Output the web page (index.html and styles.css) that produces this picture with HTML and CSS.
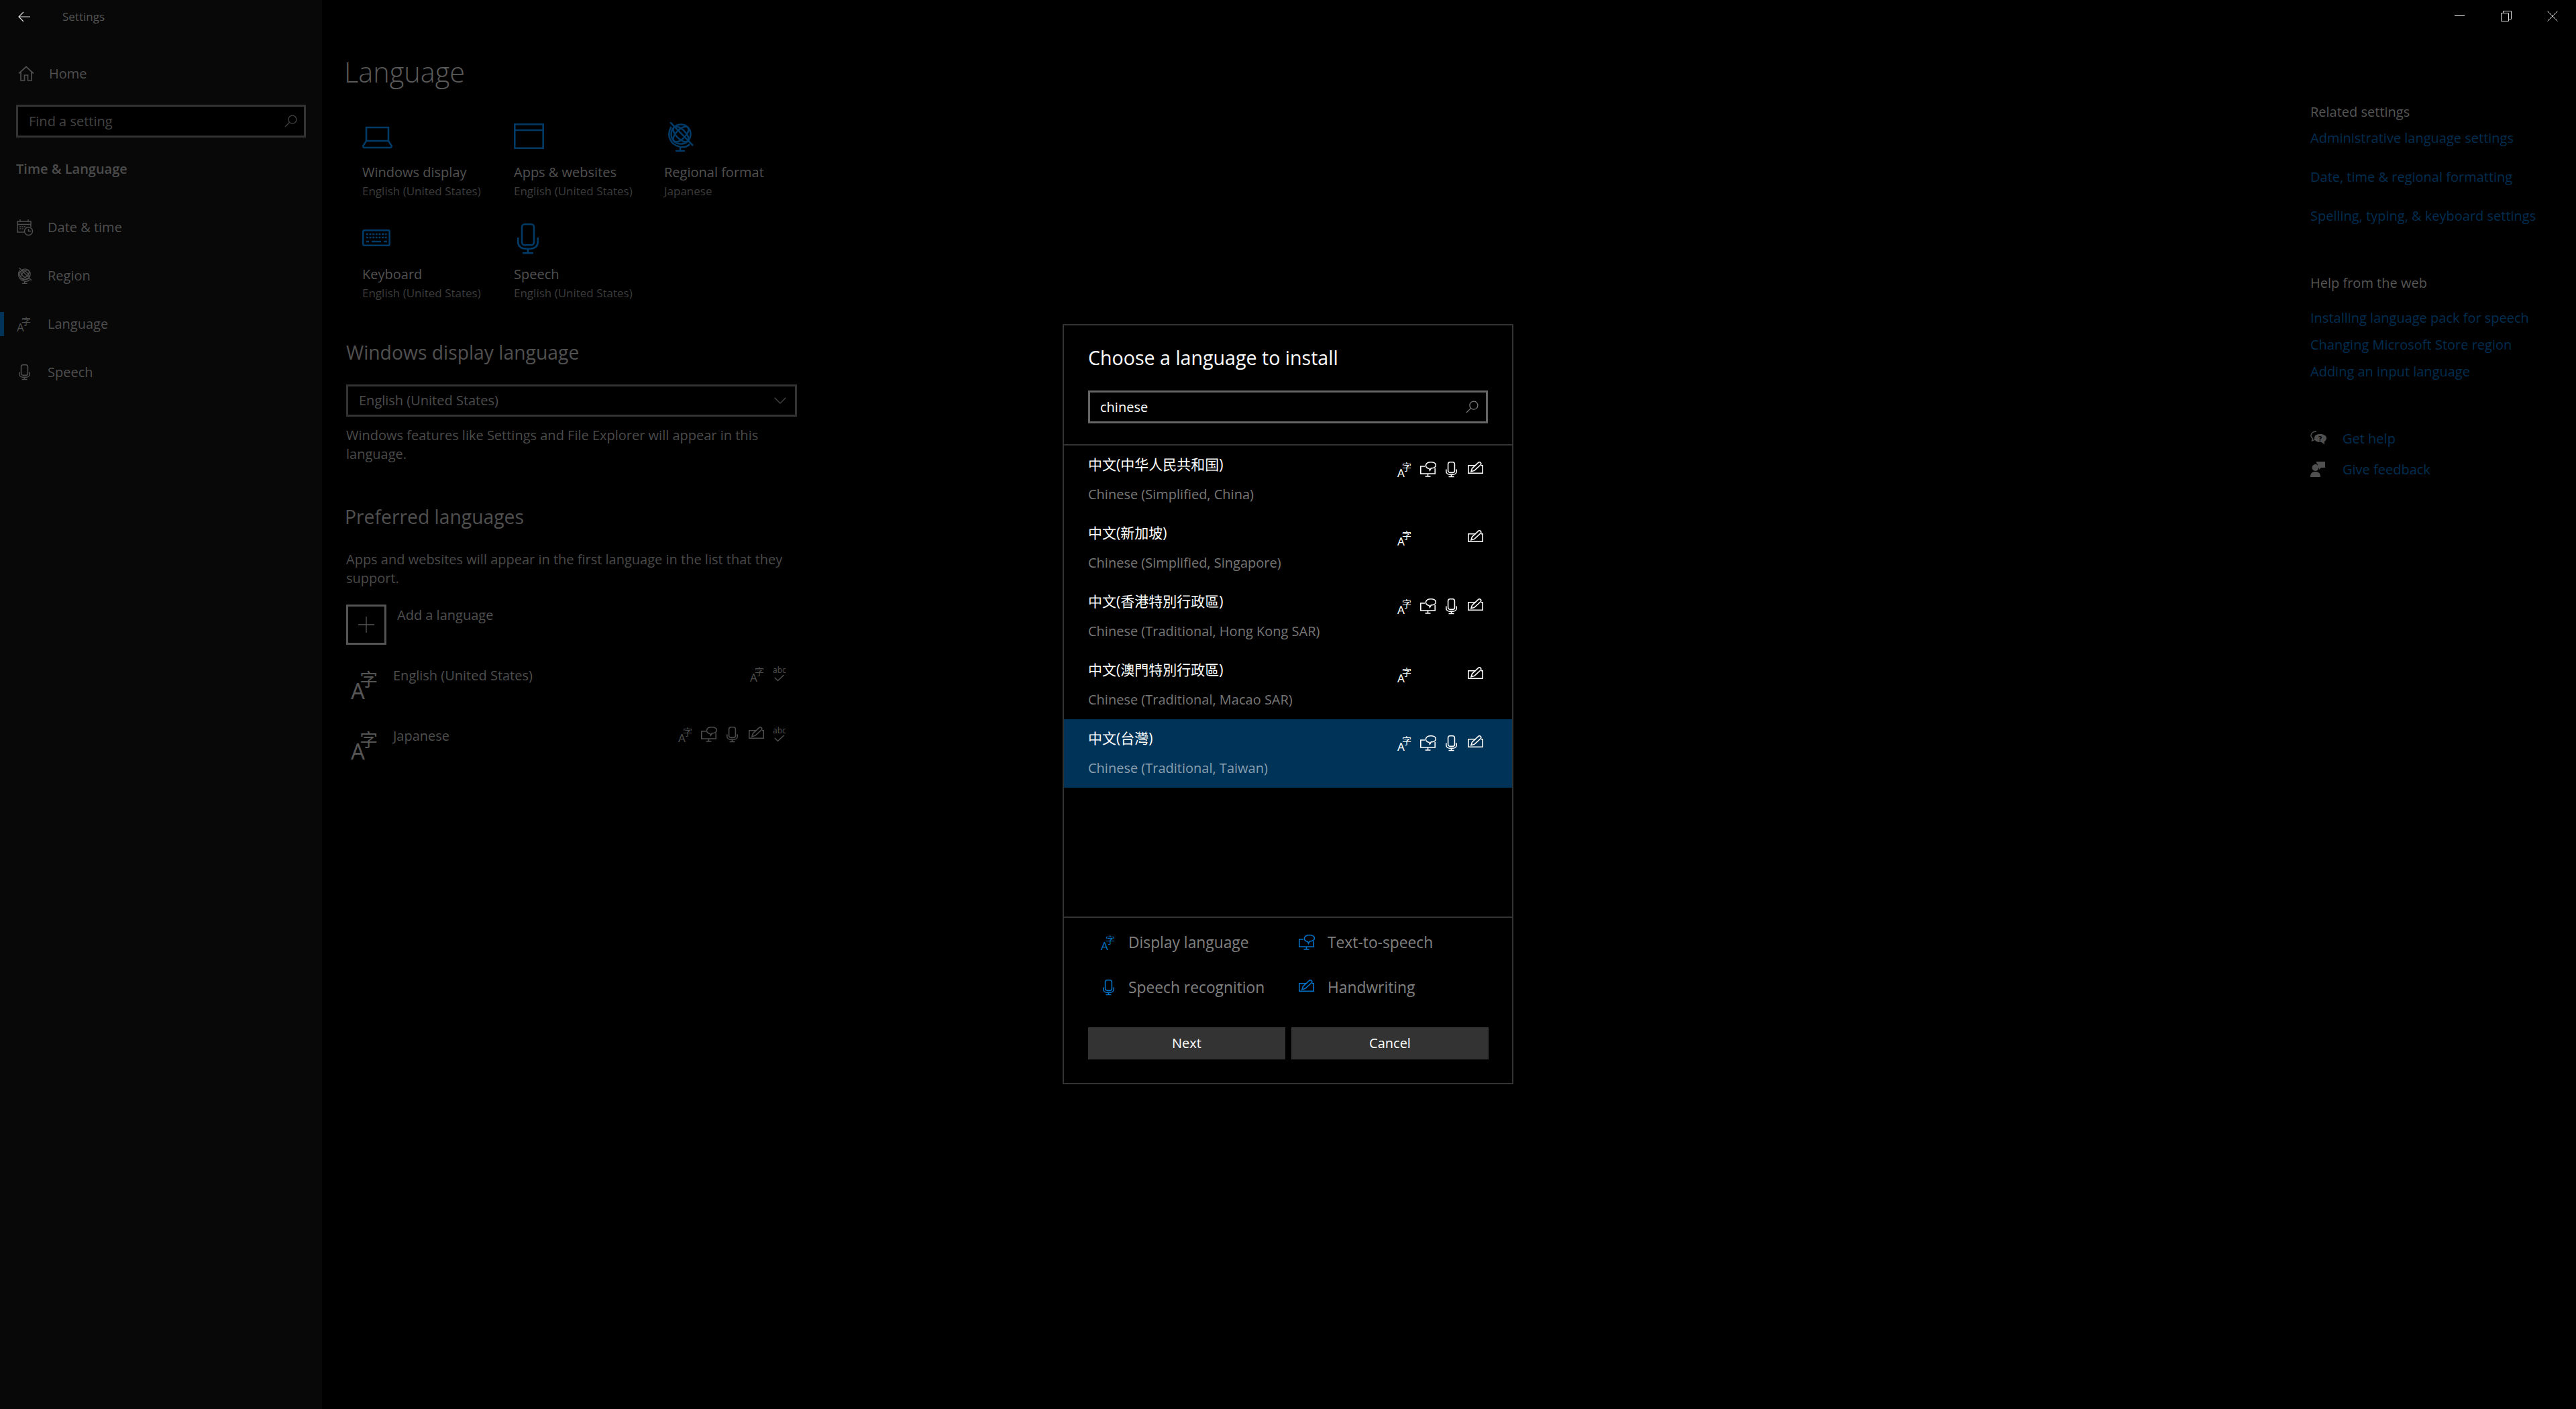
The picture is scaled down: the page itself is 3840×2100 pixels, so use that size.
FILE: index.html
```html
<!DOCTYPE html>
<html lang="en">
<head>
<meta charset="utf-8">
<title>Settings</title>
<link rel="stylesheet" href="styles.css">
</head>
<body>
<svg class="defs" width="0" height="0" aria-hidden="true">
  <symbol id="mon" viewBox="0 0 24 24">
    <g fill="none" stroke="currentColor" stroke-width="1.6">
      <path d="M7 7H.8V18H22.2V10"/><path d="M11.5 18V21.5M7.5 22H15.5"/>
      <path d="M13.5 10.5C9.5 9.5 8 7.5 8.5 5C9.2 2 12.5.8 16 .8C20 .8 23.4 2.5 23.4 5.4C23.4 8.4 19.5 10.2 16.5 9.7L14.5 13.2Z"/>
    </g>
  </symbol>
  <symbol id="mic" viewBox="0 0 24 24">
    <g fill="none" stroke="currentColor" stroke-width="1.6">
      <rect x="6.6" y=".8" width="9.8" height="15.6" rx="3"/>
      <path d="M3.8 11.5V14.5C3.8 17.5 6.5 19.2 9 19.2H14C16.5 19.2 19.2 17.5 19.2 14.5V11.5M11.5 19.2V22M7.5 22.5H15.5"/>
    </g>
  </symbol>
  <symbol id="hand" viewBox="0 0 24 24">
    <g fill="none" stroke="currentColor" stroke-width="1.6">
      <path d="M11.5 5.8H.8V17.2H22.2V5.8H20"/>
      <path d="M5 14.8L6.4 10.2L15.8 1.4C16.8.6 18 .6 19 1.6C20 2.6 20 3.8 19.2 4.8L9.8 13.4Z"/>
    </g>
  </symbol>
  <symbol id="check" viewBox="0 0 24 24">
    <path d="M3 17L7.500 21.500L16.500 13" fill="none" stroke="currentColor" stroke-width="1.6"/>
  </symbol>
  <symbol id="search" viewBox="0 0 20 20">
    <g fill="none" stroke="currentColor" stroke-width="1.4">
      <circle cx="12.5" cy="7.5" r="6.3"/><path d="M8 12L1 19"/>
    </g>
  </symbol>
  <symbol id="globe" viewBox="0 0 39 44">
    <g fill="none" stroke="currentColor" stroke-width="2.6">
      <circle cx="20" cy="18" r="14.5"/>
      <ellipse cx="20" cy="18" rx="14.5" ry="7" transform="rotate(45 20 18)"/>
      <ellipse cx="20" cy="18" rx="14.5" ry="7" transform="rotate(-45 20 18)"/>
      <path d="M4 0L38 35M5.500 7C-1 18 2 33 19 37C25 38 29 37 33 33M19 37V43M12 43H26"/>
    </g>
  </symbol>
</svg>

<aside class="sidebar">
  <div class="titlebar">
    <svg class="back" viewBox="0 0 18 16"><path d="M18 8H1M8 1L1 8L8 15" fill="none" stroke="currentColor" stroke-width="1.2"/></svg>
    <span class="app-name">Settings</span>
  </div>
  <div class="home-row">
    <svg class="ic home-ic" viewBox="0 0 24 24"><path d="M1 11.500L12 1.500L23 11.500M4 9V22H9.500V14H14.500V22H20V9" fill="none" stroke="currentColor" stroke-width="1.7"/></svg>
    <span>Home</span>
  </div>
  <div class="find">
    <span>Find a setting</span>
    <svg class="find-ic" viewBox="0 0 20 20"><use href="#search"/></svg>
  </div>
  <div class="crumb">Time &amp; Language</div>
  <nav class="nav">
    <div class="nav-row">
      <svg class="ic" viewBox="0 0 24 24"><g fill="none" stroke="currentColor" stroke-width="1.5"><path d="M11 19H1V3H21V11M1 7.500H21M5 0V4M17 0V4"/><circle cx="17.500" cy="17.500" r="6"/><path d="M17.500 14V17.500H21"/><path d="M4 11H14M4 14H11" stroke-dasharray="2 1.200"/></g></svg>
      <span>Date &amp; time</span>
    </div>
    <div class="nav-row">
      <svg class="ic" viewBox="0 0 39 44"><use href="#globe"/></svg>
      <span>Region</span>
    </div>
    <div class="nav-row current">
      <svg class="ic" viewBox="0 0 24 24"><text x="0" y="23"><tspan class="g-a">A</tspan><tspan class="g-z" dx="-4" dy="-10">字</tspan></text></svg>
      <span>Language</span>
    </div>
    <div class="nav-row">
      <svg class="ic" viewBox="0 0 24 24"><use href="#mic"/></svg>
      <span>Speech</span>
    </div>
  </nav>
</aside>

<main class="content">
  <h1>Language</h1>
  <div class="tiles">
    <div class="tile">
      <svg class="tile-ic" viewBox="0 0 56 56"><path d="M6 32V12H39V32M6 32L1.500 39C1 41 1.500 42 3 42H42C43.500 42 44 41 43.500 39L39 32Z" fill="none" stroke="currentColor" stroke-width="2.600"/></svg>
      <div class="tile-label">Windows display</div>
      <div class="tile-sub">English (United States)</div>
    </div>
    <div class="tile">
      <svg class="tile-ic" viewBox="0 0 56 56"><path d="M1.300 7.300H43.700V42.700H1.300ZM1.300 16H43.700" fill="none" stroke="currentColor" stroke-width="2.600"/></svg>
      <div class="tile-label">Apps &amp; websites</div>
      <div class="tile-sub">English (United States)</div>
    </div>
    <div class="tile">
      <svg class="tile-ic" viewBox="0 0 56 56"><use href="#globe" x="5" y="4" width="39" height="44"/></svg>
      <div class="tile-label">Regional format</div>
      <div class="tile-sub">Japanese</div>
    </div>
    <div class="tile">
      <svg class="tile-ic" viewBox="0 0 56 56"><rect x="1.300" y="13.300" width="39.400" height="22.400" rx="2" fill="none" stroke="currentColor" stroke-width="2.600"/><path d="M6 19H37M6 24H37" stroke="currentColor" stroke-width="2.600" stroke-dasharray="3 1.600"/><path d="M6 30H10M14 30H28M32 30H37" stroke="currentColor" stroke-width="2.600"/></svg>
      <div class="tile-label">Keyboard</div>
      <div class="tile-sub">English (United States)</div>
    </div>
    <div class="tile">
      <svg class="tile-ic" viewBox="0 0 56 56"><g fill="none" stroke="currentColor" stroke-width="2.600"><rect x="12" y="4.300" width="18" height="31" rx="4"/><path d="M6.300 24V31C6.300 37 11 40.700 17 40.700H25C31 40.700 35.700 37 35.700 31V24M21 40.700V47M13 47.300H29"/></g></svg>
      <div class="tile-label">Speech</div>
      <div class="tile-sub">English (United States)</div>
    </div>
  </div>

  <h2 class="h-display">Windows display language</h2>
  <div class="select">
    <span>English (United States)</span>
    <svg class="chev" viewBox="0 0 18 10"><path d="M.7 .7L9 9L17.300 .7" fill="none" stroke="currentColor" stroke-width="1.300"/></svg>
  </div>
  <p class="note note-display">Windows features like Settings and File Explorer will appear in this<br>language.</p>

  <h2 class="h-pref">Preferred languages</h2>
  <p class="note note-pref">Apps and websites will appear in the first language in the list that they<br>support.</p>
  <div class="add-row">
    <div class="add-box"><svg class="plus" viewBox="0 0 24 24"><path d="M12 0V24M0 12H24" stroke="currentColor" stroke-width="1.300"/></svg></div>
    <span class="add-label">Add a language</span>
  </div>
  <div class="pref-row pref-first">
    <svg class="pref-ic" viewBox="0 0 24 24"><text x="0" y="23"><tspan class="g-a">A</tspan><tspan class="g-z" dx="-4" dy="-10">字</tspan></text></svg>
    <span class="pref-name">English (United States)</span>
    <div class="caps">
      <svg class="cap w-lang" viewBox="0 0 24 24"><text x="0" y="23"><tspan class="g-a">A</tspan><tspan class="g-z" dx="-4" dy="-10">字</tspan></text></svg>
      <svg class="cap" viewBox="0 0 24 24"><text class="g-abc" x="0" y="10">abc</text><use href="#check"/></svg>
    </div>
  </div>
  <div class="pref-row">
    <svg class="pref-ic" viewBox="0 0 24 24"><text x="0" y="23"><tspan class="g-a">A</tspan><tspan class="g-z" dx="-4" dy="-10">字</tspan></text></svg>
    <span class="pref-name">Japanese</span>
    <div class="caps">
      <svg class="cap w-lang" viewBox="0 0 24 24"><text x="0" y="23"><tspan class="g-a">A</tspan><tspan class="g-z" dx="-4" dy="-10">字</tspan></text></svg>
      <svg class="cap w-mon" viewBox="0 0 24 24"><use href="#mon"/></svg>
      <svg class="cap w-mic" viewBox="0 0 24 24"><use href="#mic"/></svg>
      <svg class="cap w-hand" viewBox="0 0 24 24"><use href="#hand"/></svg>
      <svg class="cap" viewBox="0 0 24 24"><text class="g-abc" x="0" y="10">abc</text><use href="#check"/></svg>
    </div>
  </div>
</main>

<aside class="related">
  <div class="winctl">
    <div class="winbtn"><svg viewBox="0 0 16 16"><path d="M0 7.500H15" stroke="currentColor"/></svg></div>
    <div class="winbtn"><svg viewBox="0 0 16 16"><path d="M.5 3.500H11.500V15.500H.5ZM3.500 3.500V.5H15.500V12.500H11.500" fill="none" stroke="currentColor"/></svg></div>
    <div class="winbtn"><svg viewBox="0 0 16 16"><path d="M.5 .5L15.500 15.500M15.500 .5L.5 15.500" stroke="currentColor"/></svg></div>
  </div>
  <div class="rel-group rel-settings">
    <div class="rel-head">Related settings</div>
    <a class="link l-first">Administrative language settings</a>
    <a class="link">Date, time &amp; regional formatting</a>
    <a class="link">Spelling, typing, &amp; keyboard settings</a>
  </div>
  <div class="rel-group rel-web">
    <div class="rel-head">Help from the web</div>
    <a class="link l-web-first">Installing language pack for speech</a>
    <a class="link">Changing Microsoft Store region</a>
    <a class="link">Adding an input language</a>
  </div>
  <div class="rel-actions">
    <div class="action">
      <svg class="action-ic" viewBox="0 0 24 24"><path d="M9 1C4 1 .8 3.800 .8 7C.8 9 2 10.500 3.500 11.500L2.500 15L7 13" fill="none" stroke="currentColor" stroke-width="1.400"/><path d="M6 11C6 6.500 10 5 15 5C20 5 24 7.500 24 11C24 13.500 22.500 15 21 16V20.500L16.500 17C10 17.500 6 15 6 11Z" fill="currentColor"/><text class="g-q" x="12" y="16">?</text></svg>
      <a class="link">Get help</a>
    </div>
    <div class="action">
      <svg class="action-ic" viewBox="0 0 24 24"><circle cx="7.500" cy="9" r="5" fill="currentColor"/><path d="M0 23C0 17 3 15 7.500 15C12 15 15 17 15 23Z" fill="currentColor"/><path d="M9 0H22V9H16L13 12V9H11C11.500 6 11 3 9 2Z" fill="currentColor"/></svg>
      <a class="link">Give feedback</a>
    </div>
  </div>
</aside>

<section class="dialog">
  <header class="dlg-head">
    <h3 class="dlg-title">Choose a language to install</h3>
    <div class="dlg-search">
      <span>chinese</span>
      <svg class="dlg-search-ic" viewBox="0 0 20 20"><use href="#search"/></svg>
    </div>
  </header>
  <div class="dlg-list">
    <div class="opt">
      <div class="opt-text"><div class="opt-zh zh-sc">中文(中华人民共和国)</div><div class="opt-en">Chinese (Simplified, China)</div></div>
      <div class="opt-caps">
        <svg class="cap w-lang" viewBox="0 0 24 24"><text x="0" y="23"><tspan class="g-a">A</tspan><tspan class="g-z" dx="-4" dy="-10">字</tspan></text></svg>
        <svg class="cap w-mon" viewBox="0 0 24 24"><use href="#mon"/></svg>
        <svg class="cap w-mic" viewBox="0 0 24 24"><use href="#mic"/></svg>
        <svg class="cap" viewBox="0 0 24 24"><use href="#hand"/></svg>
      </div>
    </div>
    <div class="opt">
      <div class="opt-text"><div class="opt-zh zh-sc">中文(新加坡)</div><div class="opt-en">Chinese (Simplified, Singapore)</div></div>
      <div class="opt-caps">
        <svg class="cap w-lang" viewBox="0 0 24 24"><text x="0" y="23"><tspan class="g-a">A</tspan><tspan class="g-z" dx="-4" dy="-10">字</tspan></text></svg>
        <span class="cap w-mon"></span>
        <span class="cap w-mic"></span>
        <svg class="cap" viewBox="0 0 24 24"><use href="#hand"/></svg>
      </div>
    </div>
    <div class="opt">
      <div class="opt-text"><div class="opt-zh zh-tc">中文(香港特別行政區)</div><div class="opt-en">Chinese (Traditional, Hong Kong SAR)</div></div>
      <div class="opt-caps">
        <svg class="cap w-lang" viewBox="0 0 24 24"><text x="0" y="23"><tspan class="g-a">A</tspan><tspan class="g-z" dx="-4" dy="-10">字</tspan></text></svg>
        <svg class="cap w-mon" viewBox="0 0 24 24"><use href="#mon"/></svg>
        <svg class="cap w-mic" viewBox="0 0 24 24"><use href="#mic"/></svg>
        <svg class="cap" viewBox="0 0 24 24"><use href="#hand"/></svg>
      </div>
    </div>
    <div class="opt">
      <div class="opt-text"><div class="opt-zh zh-tc">中文(澳門特別行政區)</div><div class="opt-en">Chinese (Traditional, Macao SAR)</div></div>
      <div class="opt-caps">
        <svg class="cap w-lang" viewBox="0 0 24 24"><text x="0" y="23"><tspan class="g-a">A</tspan><tspan class="g-z" dx="-4" dy="-10">字</tspan></text></svg>
        <span class="cap w-mon"></span>
        <span class="cap w-mic"></span>
        <svg class="cap" viewBox="0 0 24 24"><use href="#hand"/></svg>
      </div>
    </div>
    <div class="opt selected">
      <div class="opt-text"><div class="opt-zh zh-tc">中文(台灣)</div><div class="opt-en">Chinese (Traditional, Taiwan)</div></div>
      <div class="opt-caps">
        <svg class="cap w-lang" viewBox="0 0 24 24"><text x="0" y="23"><tspan class="g-a">A</tspan><tspan class="g-z" dx="-4" dy="-10">字</tspan></text></svg>
        <svg class="cap w-mon" viewBox="0 0 24 24"><use href="#mon"/></svg>
        <svg class="cap w-mic" viewBox="0 0 24 24"><use href="#mic"/></svg>
        <svg class="cap" viewBox="0 0 24 24"><use href="#hand"/></svg>
      </div>
    </div>
  </div>
  <div class="legend">
    <div class="leg"><svg class="leg-ic" viewBox="0 0 24 24"><text x="0" y="23"><tspan class="g-a">A</tspan><tspan class="g-z" dx="-4" dy="-10">字</tspan></text></svg><span>Display language</span></div>
    <div class="leg leg-r"><svg class="leg-ic" viewBox="0 0 24 24"><use href="#mon"/></svg><span>Text-to-speech</span></div>
    <div class="leg"><svg class="leg-ic" viewBox="0 0 24 24"><use href="#mic"/></svg><span>Speech recognition</span></div>
    <div class="leg leg-r"><svg class="leg-ic" viewBox="0 0 24 24"><use href="#hand"/></svg><span>Handwriting</span></div>
  </div>
  <div class="dlg-btns">
    <button class="btn">Next</button>
    <button class="btn">Cancel</button>
  </div>
</section>
</body>
</html>
```

FILE: styles.css
```css
* { box-sizing: border-box; }
html, body { margin: 0; padding: 0; }
body {
  width: 3840px;
  height: 2100px;
  overflow: hidden;
  display: flex;
  background: #000;
  font-family: "Open Sans", "Noto Sans", "Noto Sans CJK SC", sans-serif;
  font-size: 20px;
  line-height: 28px;
  color: #555;
  position: relative;
}
.defs { position: absolute; }
svg { overflow: visible; }
svg text { fill: currentColor; }
.g-a { font: 17px "Noto Sans", sans-serif; }
.g-z { font: 14px "Noto Sans CJK SC", sans-serif; }
.g-abc { font: 12px "Noto Sans", sans-serif; }
svg .g-q { font: bold 11px "Noto Sans", sans-serif; fill: #000; }

/* sidebar */
.sidebar { width: 480px; flex: none; background: #080808; height: 2100px; color: #4e4e4e; }
.titlebar { height: 50px; display: flex; align-items: center; padding-left: 27px; }
.back { width: 18px; height: 16px; color: #e0e0e0; margin-right: 48px; }
.app-name { font-size: 17px; color: #545454; }
.home-row { margin-top: 38px; height: 44px; display: flex; align-items: center; padding-left: 27px; gap: 22px; font-size: 20px; }
.ic { width: 24px; height: 24px; flex: none; }
.find { margin: 24px 0 0 24px; width: 432px; height: 49px; border: 3px solid #333; background: #000; display: flex; align-items: center; justify-content: space-between; padding: 0 10px 0 16px; color: #434343; }
.find-ic { width: 19px; height: 19px; color: #444; }
.crumb { margin: 27px 0 0 24px; height: 40px; line-height: 40px; font-weight: 600; color: #4c4c4c; }
.nav { margin-top: 31px; }
.nav-row { height: 72px; display: flex; align-items: center; gap: 22px; padding-left: 25px; position: relative; }
.current::before { content: ""; position: absolute; left: 0; top: 18px; width: 6px; height: 36px; background: #003358; }

/* main column */
.content { flex: 1; padding: 79px 0 0 34px; min-width: 0; }
h1 { margin: 0 0 0 -1px; font-size: 41.500px; line-height: 56px; font-weight: 300; color: #5a5a5a; }
.tiles { margin: 43px 0 0 26px; display: grid; grid-template-columns: 226px 224px 226px; grid-auto-rows: 121px; row-gap: 31px; width: 676px; }
.tile-ic { display: block; width: 56px; height: 56px; margin-bottom: 9px; color: #003a66; }
.tile-label { color: #505050; white-space: nowrap; }
.tile-sub { color: #3c3c3c; font-size: 17px; white-space: nowrap; }
h2 { margin: 0; font-size: 28.300px; line-height: 38px; font-weight: 400; color: #505050; }
.h-display { margin: 55px 0 0 2px; }
.select { margin: 29px 0 0 2px; width: 672px; height: 48px; border: 3px solid #333; display: flex; align-items: center; justify-content: space-between; padding: 0 13px 0 16px; color: #4c4c4c; }
.chev { width: 18px; height: 10px; color: #444; }
.note { margin: 0 0 0 2px; white-space: nowrap; color: #4a4a4a; }
.note-display { margin-top: 14px; }
.h-pref { margin-top: 60px; }
.note-pref { margin-top: 31px; }
.add-row { margin: 25px 0 0 2px; height: 60px; display: flex; align-items: flex-start; }
.add-box { width: 60px; height: 60px; border: 3px solid #555; display: flex; align-items: center; justify-content: center; color: #555; }
.plus { width: 24px; height: 24px; }
.add-label { margin: 2px 0 0 16px; color: #505050; }
.pref-row { margin-left: 2px; width: 672px; height: 90px; display: flex; align-items: flex-start; position: relative; padding-left: 7px; }
.pref-first { margin-top: 29px; }
.pref-ic { width: 46px; height: 46px; margin-top: 8px; color: #555; flex: none; }
.pref-name { margin: 3px 0 0 17px; color: #4e4e4e; }
.caps { margin: 3px 0 0 auto; padding-right: 12px; display: flex; color: #4c4c4c; }
.cap { width: 24px; height: 24px; flex: none; display: block; }
.w-lang { width: 24px; margin-right: 10px; }
.w-mon { margin-right: 11px; }
.w-mic { margin-right: 12px; }
.w-hand { margin-right: 12px; }

/* right column */
.related { width: 396px; flex: none; display: flex; flex-direction: column; }
.winctl { display: flex; justify-content: flex-end; height: 48px; padding-right: 1px; color: #dcdcdc; }
.winbtn { width: 69px; height: 48px; display: flex; align-items: center; justify-content: center; }
.winbtn svg { width: 16px; height: 16px; }
.rel-group { display: flex; flex-direction: column; }
.rel-settings { margin-top: 105px; }
.rel-web { margin-top: 72px; }
.rel-head { color: #555; }
.link { display: block; color: #002d50; white-space: nowrap; }
.rel-settings .link { margin-top: 30px; }
.rel-settings .l-first { margin-top: 11px; }
.rel-web .link { margin-top: 12px; }
.rel-web .l-web-first { margin-top: 24px; }
.rel-actions { margin-top: 72px; display: flex; flex-direction: column; gap: 18px; }
.action { display: flex; align-items: center; gap: 24px; height: 28px; }
.action-ic { width: 24px; height: 24px; color: #505050; flex: none; }

/* dialog */
.dialog { position: absolute; left: 1584px; top: 483px; width: 672px; height: 1133px; background: #000; border: 2px solid #333; display: flex; flex-direction: column; }
.dlg-head { height: 179px; flex: none; padding: 29px 36px 0; border-bottom: 2px solid #333; }
.dlg-title { margin: 0; font-size: 28.600px; line-height: 38px; font-weight: 400; color: #fff; }
.dlg-search { margin-top: 30px; height: 49px; width: 596px; border: 3px solid #666; display: flex; align-items: center; justify-content: space-between; padding: 0 11px 0 15px; color: #fff; }
.dlg-search-ic { width: 19px; height: 19px; color: #777; }
.dlg-list { height: 704px; flex: none; border-bottom: 2px solid #333; }
.opt { height: 102px; padding: 14px 42px 0 36px; display: flex; justify-content: space-between; }
.opt.selected { background: #003358; }
.opt-zh { color: #fff; height: 28px; font-size: 21px; }
.zh-sc { font-family: "Open Sans", "Noto Sans CJK SC", sans-serif; }
.zh-tc { font-family: "Open Sans", "Noto Sans CJK TC", sans-serif; }
.opt-en { margin-top: 17px; color: #777; }
.selected .opt-en { color: #8aa0b0; }
.opt-caps { display: flex; margin-top: 10px; color: #fff; }
.legend { display: grid; grid-template-columns: 295px 295px; grid-auto-rows: 67px; padding: 3px 0 0 55px; flex: none; height: 137px; color: #808080; }
.leg { display: flex; align-items: center; gap: 17px; font-size: 22.800px; }
.leg-r { gap: 19px; }
.leg-ic { width: 24px; height: 24px; color: #0072c6; flex: none; }
.dlg-btns { padding: 26px 35px 0 36px; display: flex; gap: 9px; }
.btn { width: 294px; height: 48px; border: 0; background: #333; color: #fff; font: inherit; padding: 0; }
```
